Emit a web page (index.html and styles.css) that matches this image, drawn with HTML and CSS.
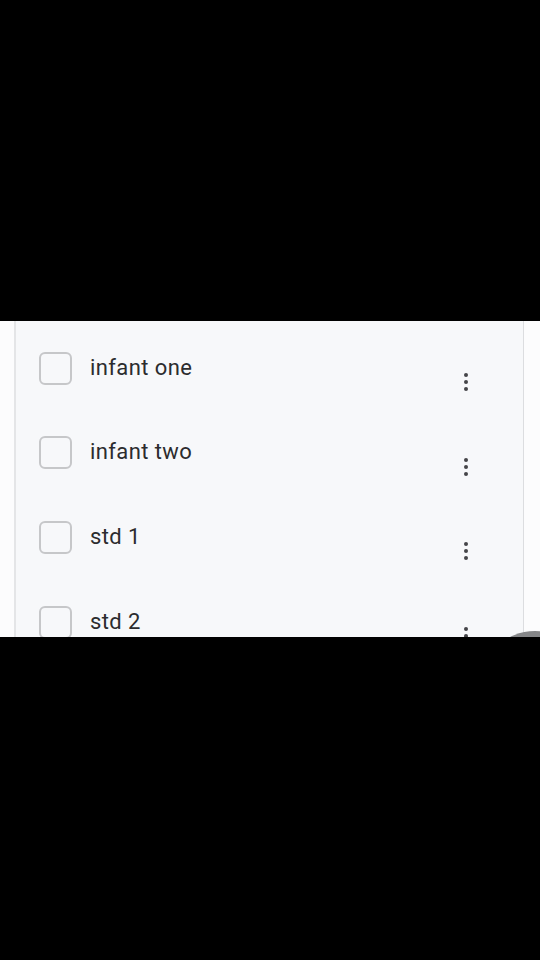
FILE: index.html
```html
<!DOCTYPE html>
<html lang="en">
<head>
    <meta charset="UTF-8">
    <meta name="viewport" content="width=device-width, initial-scale=1.0">
    <title>Classes</title>
    <link rel="stylesheet" href="styles.css">
</head>
<body>
    <div class="bar-top"></div>

    <div class="screen">
        <div class="side left"></div>
        <div class="card">
            <div class="row">
                <span class="box"></span>
                <span class="label">infant one</span>
                <span class="menu"><i></i><i></i><i></i></span>
            </div>
            <div class="row">
                <span class="box"></span>
                <span class="label">infant two</span>
                <span class="menu"><i></i><i></i><i></i></span>
            </div>
            <div class="row">
                <span class="box"></span>
                <span class="label">std 1</span>
                <span class="menu"><i></i><i></i><i></i></span>
            </div>
            <div class="row">
                <span class="box"></span>
                <span class="label">std 2</span>
                <span class="menu"><i></i><i></i><i></i></span>
            </div>
        </div>
        <div class="side right"></div>
        <div class="fab"></div>
    </div>

    <div class="bar-bottom"></div>
</body>
</html>
```

FILE: styles.css
```css
body { margin: 0; background: #000; font-family: Roboto, "Noto Sans", sans-serif; }
.bar-top { height: 321px; }
.bar-bottom { height: 323px; }
.screen { position: relative; height: 316px; overflow: hidden; display: flex; background: #fcfcfd; }
.side.left { width: 14px; border-right: 2px solid #e4e5e7; }
.side.right { width: 16px; border-left: 1.5px solid #dcdde0; }
.card { flex: 1; background: #f7f8fa; padding: 4px 0 0 23px; }
.row { height: 84.6px; display: flex; align-items: center; }
.box { width: 29px; height: 29px; border: 2px solid #c6c7c9; border-radius: 6px; box-sizing: content-box; margin-top: 2px; }
.label { flex: 1; margin-left: 18px; font-size: 22px; color: #2c2c2e; letter-spacing: 0.4px; }
.menu { width: 4px; display: flex; flex-direction: column; gap: 3px; margin: 30px 55px 0 0; }
.menu i { display: block; width: 4px; height: 4px; border-radius: 50%; background: #454548; }
.fab { position: absolute; left: 480px; top: 310px; width: 110px; height: 110px; border-radius: 50%; background: #858688; }
```
